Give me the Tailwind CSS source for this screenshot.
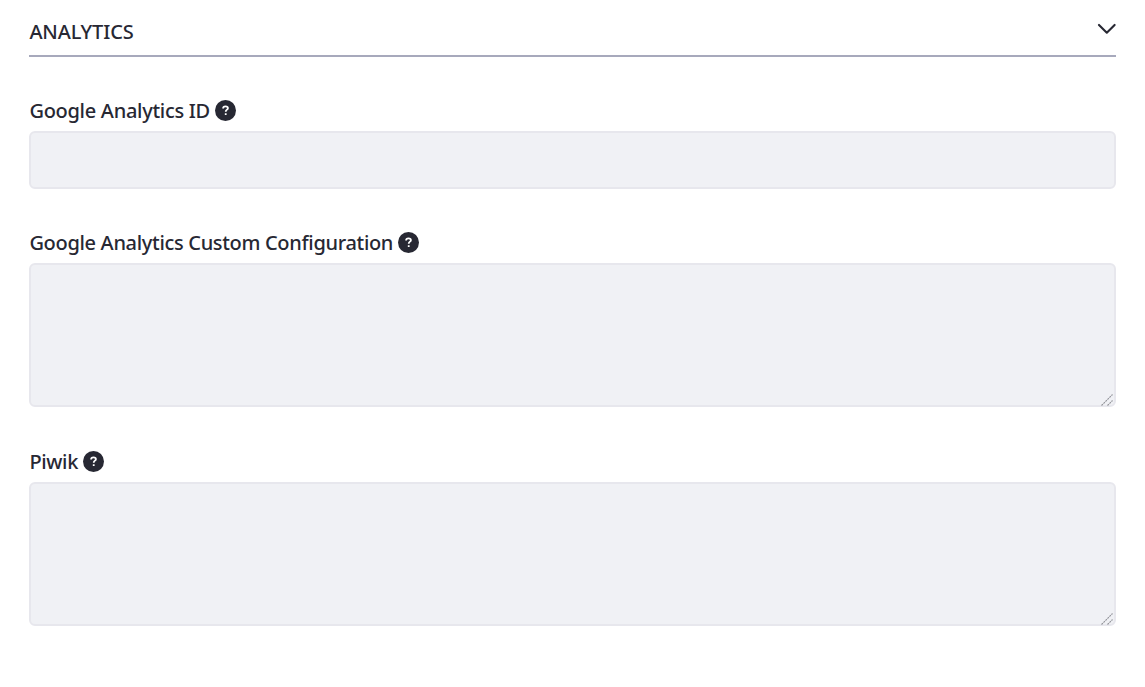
<!DOCTYPE html>
<html lang="en"><head><meta charset="utf-8"><title>Analytics</title>
<script src="https://cdn.jsdelivr.net/npm/@tailwindcss/browser@4"></script></head>
<body class="bg-white font-['Noto_Sans','Open_Sans',sans-serif] text-[#272833]">
<svg class="hidden"><symbol id="help" viewBox="0 0 20 20"><circle cx="10" cy="10" r="10" fill="#272833"/><path d="M7.700 8C7.700 6.600 8.700 6 10 6c1.350 0 2.300.7 2.300 1.800C12.300 9.300 10.200 9.100 10.200 11.100M10.200 12.500v1.700" fill="none" stroke="#fff" stroke-width="1.700"/></symbol>
<symbol id="grip" viewBox="0 0 14 14"><path d="M1.500 12.500 12.500 1.500M7.500 12.500 12.500 7.500" fill="none" stroke="#919298" stroke-width="1.100" stroke-dasharray="2 .8"/></symbol></svg>
<main class="flex flex-col pr-[29.400px] pl-[29.400px]">
<header class="flex h-[57px] justify-between border-b-2 border-[#a7a9bc] pt-[18px]"><h1 class="h-7 text-[20px] leading-7 font-medium tracking-[-0.15px]"><span class="inline-block">ANALYTICS</span></h1>
<svg class="mt-[5px] h-3 w-[19px]" viewBox="0 0 19 12" fill="none" stroke="#272833" stroke-width="2.100" stroke-linecap="round" stroke-linejoin="round"><path d="m2 1.900 7.800 7.800L17.600 1.900"/></svg></header>
<section class="mt-10"><label class="flex h-7 items-center gap-[5px] text-[20px] leading-7 font-medium tracking-[-0.29px]"><span>Google Analytics ID</span><svg class="mb-px size-[21px]"><use href="#help"/></svg></label><input class="mt-1.5 block h-[58px] w-full rounded-md border-2 border-[#e7e7ed] bg-[#f0f1f5]"></section>
<section class="mt-10"><label class="flex h-7 items-center gap-[5px] text-[20px] leading-7 font-medium tracking-[-0.32px]"><span>Google Analytics Custom Configuration</span><svg class="mb-px size-[21px]"><use href="#help"/></svg></label><div class="relative mt-1.5"><textarea class="block h-[144px] w-full resize-none rounded-md border-2 border-[#e7e7ed] bg-[#f0f1f5]"></textarea><svg class="pointer-events-none absolute right-0.5 bottom-0 size-3.5"><use href="#grip"/></svg></div></section>
<section class="mt-[41px]"><label class="flex h-7 items-center gap-[5px] text-[20px] leading-7 font-medium tracking-[-0.35px]"><span>Piwik</span><svg class="mb-px size-[21px]"><use href="#help"/></svg></label><div class="relative mt-1.5"><textarea class="block h-[144px] w-full resize-none rounded-md border-2 border-[#e7e7ed] bg-[#f0f1f5]"></textarea><svg class="pointer-events-none absolute right-0.5 bottom-0 size-3.5"><use href="#grip"/></svg></div></section>
</main></body></html>
